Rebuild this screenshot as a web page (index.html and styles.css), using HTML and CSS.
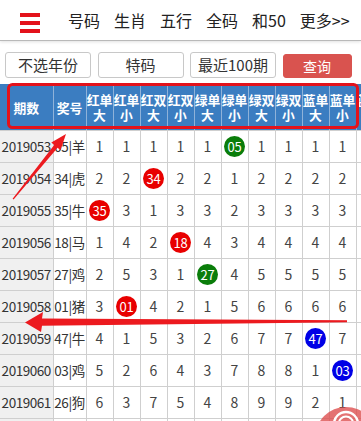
FILE: index.html
```html
<!DOCTYPE html>
<html lang="zh-CN">
<head>
<meta charset="utf-8">
<title>特码统计</title>
<link rel="stylesheet" href="styles.css">
</head>
<body>
<header class="nav">
  <span class="menu-icon"><i></i><i></i><i></i></span>
  <a class="nav-link">号码</a>
  <a class="nav-link">生肖</a>
  <a class="nav-link">五行</a>
  <a class="nav-link">全码</a>
  <a class="nav-link">和50</a>
  <a class="nav-link">更多&gt;&gt;</a>
</header>

<div class="filters">
  <button class="btn">不选年份</button>
  <button class="btn">特码</button>
  <button class="btn">最近100期</button>
  <button class="btn btn-query">查询</button>
</div>

<div class="table-wrap">
<table class="stats">
  <colgroup>
    <col class="c-period"><col class="c-num">
    <col class="c-s"><col class="c-s"><col class="c-s"><col class="c-s">
    <col class="c-s"><col class="c-s"><col class="c-s"><col class="c-s">
    <col class="c-s"><col class="c-s"><col class="c-s"><col class="c-s">
  </colgroup>
  <thead>
    <tr>
      <th>期数</th><th>奖号</th>
      <th>红单<br>大</th><th>红单<br>小</th><th>红双<br>大</th><th>红双<br>小</th>
      <th>绿单<br>大</th><th>绿单<br>小</th><th>绿双<br>大</th><th>绿双<br>小</th>
      <th>蓝单<br>大</th><th>蓝单<br>小</th><th>蓝双<br>大</th><th>蓝双<br>小</th>
    </tr>
  </thead>
  <tbody>
    <tr><td class="period">2019053</td><td class="num">05|羊</td><td>1</td><td>1</td><td>1</td><td>1</td><td>1</td><td><span class="ball green">05</span></td><td>1</td><td>1</td><td>1</td><td>1</td><td>1</td><td>1</td></tr>
    <tr><td class="period">2019054</td><td class="num">34|虎</td><td>2</td><td>2</td><td><span class="ball red">34</span></td><td>2</td><td>2</td><td>1</td><td>2</td><td>2</td><td>2</td><td>2</td><td>2</td><td>2</td></tr>
    <tr><td class="period">2019055</td><td class="num">35|牛</td><td><span class="ball red">35</span></td><td>3</td><td>1</td><td>3</td><td>3</td><td>2</td><td>3</td><td>3</td><td>3</td><td>3</td><td>3</td><td>3</td></tr>
    <tr><td class="period">2019056</td><td class="num">18|马</td><td>1</td><td>4</td><td>2</td><td><span class="ball red">18</span></td><td>4</td><td>3</td><td>4</td><td>4</td><td>4</td><td>4</td><td>4</td><td>4</td></tr>
    <tr><td class="period">2019057</td><td class="num">27|鸡</td><td>2</td><td>5</td><td>3</td><td>1</td><td><span class="ball green">27</span></td><td>4</td><td>5</td><td>5</td><td>5</td><td>5</td><td>5</td><td>5</td></tr>
    <tr><td class="period">2019058</td><td class="num">01|猪</td><td>3</td><td><span class="ball red">01</span></td><td>4</td><td>2</td><td>1</td><td>5</td><td>6</td><td>6</td><td>6</td><td>6</td><td>6</td><td>6</td></tr>
    <tr><td class="period">2019059</td><td class="num">47|牛</td><td>4</td><td>1</td><td>5</td><td>3</td><td>2</td><td>6</td><td>7</td><td>7</td><td><span class="ball blue">47</span></td><td>7</td><td>7</td><td>7</td></tr>
    <tr><td class="period">2019060</td><td class="num">03|鸡</td><td>5</td><td>2</td><td>6</td><td>4</td><td>3</td><td>7</td><td>8</td><td>8</td><td>1</td><td><span class="ball blue">03</span></td><td>8</td><td>8</td></tr>
    <tr><td class="period">2019061</td><td class="num">26|狗</td><td>6</td><td>3</td><td>7</td><td>5</td><td>4</td><td>8</td><td>9</td><td>9</td><td>2</td><td>1</td><td>9</td><td>9</td></tr>
    <tr><td class="period">2019062</td><td class="num">11|兔</td><td>7</td><td>4</td><td>8</td><td>6</td><td>5</td><td>9</td><td>10</td><td>10</td><td>3</td><td>2</td><td>10</td><td>10</td></tr>
  </tbody>
</table>
</div>

<svg class="annotations" width="361" height="421" viewBox="0 0 361 421" aria-hidden="true">
  <rect x="8.5" y="84.5" width="349" height="43" rx="4" ry="4" fill="none" stroke="#e3121b" stroke-width="3"/>
  <polygon fill="#ec1a1f" points="12.6,198.7 54.2,145.0 51.3,142.6 66,134 60.5,150.2 57.6,147.8 13.6,199.4"/>
  <polygon fill="#ec1a1f" points="25,322.5 43,312 42,318.5 347,320.3 347,322.3 42,325.8 41,332"/>
</svg>

<div class="chat-fab" aria-label="在线客服">
  <svg width="62" height="62" viewBox="0 0 62 62">
    <circle cx="31" cy="31" r="31" fill="#dc4b4b" fill-opacity="0.78"/>
    <path d="M19 17 a12 12 0 0 1 24 0" fill="none" stroke="#fff" stroke-width="2.4"/>
    <path d="M24 16 a7 6.5 0 0 1 14 0" fill="none" stroke="#fff" stroke-width="2"/>
    <rect x="17" y="17" width="4" height="8" rx="1.5" fill="#fff"/>
    <rect x="41" y="17" width="4" height="8" rx="1.5" fill="#fff"/>
  </svg>
</div>
</body>
</html>
```

FILE: styles.css
```css
* { box-sizing: border-box; }

html, body {
  margin: 0;
  padding: 0;
}

body {
  position: relative;
  width: 361px;
  height: 421px;
  overflow: hidden;
  background: #fff;
  font-family: "Noto Sans CJK SC", "Noto Sans", sans-serif;
  color: #333;
}

/* top navigation */
.nav {
  height: 41px;
  display: flex;
  align-items: center;
  gap: 14px;
  padding-left: 20px;
  background: #fff;
  border-bottom: 1px solid #b9b9b9;
  box-shadow: 0 1px 3px rgba(0, 0, 0, 0.12);
}

.menu-icon {
  width: 20px;
  height: 20px;
  margin-top: 5px;
  margin-right: 14px;
  display: flex;
  flex-direction: column;
  justify-content: space-between;
}

.menu-icon i {
  display: block;
  height: 4px;
  background: #e3121b;
}

.nav-link {
  font-size: 16px;
  line-height: 20px;
  color: #222;
  white-space: nowrap;
}

/* filter buttons */
.filters {
  display: flex;
  align-items: flex-start;
  gap: 6.5px;
  padding: 11px 0 0 5px;
}

.btn {
  width: 86px;
  height: 26px;
  padding: 0;
  background: #fff;
  border: 1px solid #c8c8c8;
  border-radius: 3px;
  font-family: inherit;
  font-size: 15px;
  line-height: 22px;
  color: #333;
}

.btn-query {
  width: 69px;
  height: 24px;
  margin-top: 2px;
  background: #d9534f;
  border-color: #d9534f;
  color: #fff;
  font-size: 14px;
}

/* table */
.table-wrap {
  margin-top: 6px;
  width: 361px;
  overflow: hidden;
}

.stats {
  table-layout: fixed;
  border-collapse: collapse;
  width: 410px;
}

.c-period { width: 53px; }
.c-num { width: 33px; }
.c-s { width: 27px; }

.stats th {
  height: 46px;
  padding: 2px 0 0;
  background: #3b7dc1;
  color: #fff;
  font-size: 12.8px;
  line-height: 14.5px;
  font-weight: 700;
  text-align: center;
  white-space: nowrap;
  border-left: 1px solid #8fb2d9;
  border-bottom: 1px solid #cfcfcf;
}

.stats th:first-child { border-left: none; }

.stats td {
  height: 32px;
  padding: 0;
  font-size: 14px;
  line-height: 18px;
  color: #444;
  text-align: center;
  white-space: nowrap;
  border: 1px solid #cfcfcf;
}

.stats td:first-child { border-left: none; }

.stats td.period {
  background: #f0f0f0;
  color: #333;
  font-size: 13.5px;
  letter-spacing: -0.45px;
}

.stats td.num {
  font-size: 13.5px;
  letter-spacing: -0.4px;
  color: #333;
}

.ball {
  display: inline-block;
  width: 21px;
  height: 21px;
  border-radius: 50%;
  color: #fff;
  font-size: 13px;
  line-height: 21px;
  letter-spacing: -0.3px;
  text-align: center;
  vertical-align: middle;
}

.ball.red { background: #e80000; }
.ball.green { background: #0a7d0a; }
.ball.blue { background: #0000e6; }

/* overlays */
.annotations {
  position: absolute;
  left: 0;
  top: 0;
  pointer-events: none;
}

.chat-fab {
  position: absolute;
  left: 315px;
  top: 407px;
  width: 62px;
  height: 62px;
}

.chat-fab svg { display: block; }
```
